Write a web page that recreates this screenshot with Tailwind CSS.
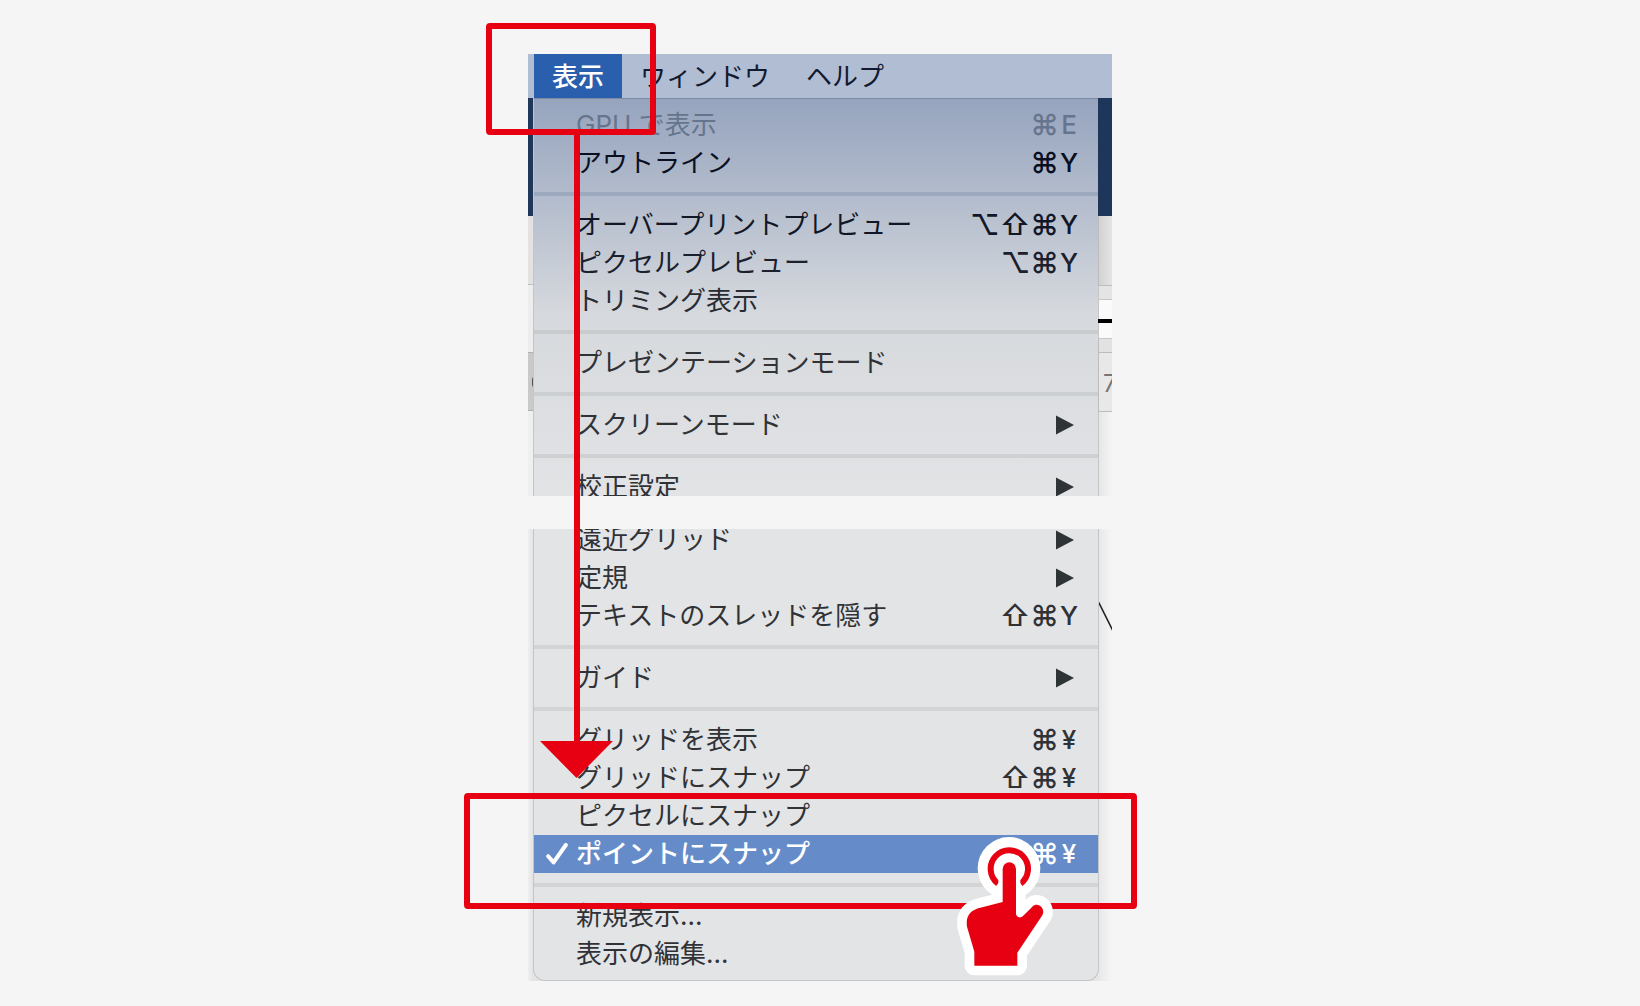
<!DOCTYPE html>
<html lang="ja">
<head>
  <meta charset="UTF-8" />
  <meta name="viewport" content="width=device-width, initial-scale=1.0" />
  <title>表示メニュー - ポイントにスナップ</title>
  <script src="https://cdn.jsdelivr.net/npm/@tailwindcss/browser@4"></script>
</head>
<body class="bg-[#f5f5f5] font-['Inter','Noto_Sans_CJK_JP',sans-serif] text-[26px] leading-[38px] text-[#303236]">
  <main class="flex min-h-screen justify-center pt-[54px] pb-6">
    <div class="relative w-[584px]">

      <!-- Upper part of the menu -->
      <section class="flex h-[442px] flex-col overflow-hidden">
        <nav class="flex h-11 shrink-0 bg-[#b1bdd3] pl-1.5 leading-[46px] text-[#111a2e]">
          <button class="bg-[#2a5fae] px-[18px] font-medium text-white">表示</button>
          <button class="px-[18px]">ウィンドウ</button>
          <button class="px-[18px]">ヘルプ</button>
        </nav>

        <div class="flex">
          <!-- Window behind the menu, left edge -->
          <div class="w-1.5 shrink-0 border-r border-[#c4c5c7]">
            <div class="h-[118px] bg-[#1f3759]"></div>
            <div class="h-[69px] border-b border-[#bdbdbd] bg-[#e3e2e1]"></div>
            <div class="h-[67px] bg-[#ededed]"></div>
            <div class="flex h-[59px] items-center overflow-hidden border-y border-[#b0b0b0] bg-[#c9c9c9]">
              <div class="ml-1 h-3 w-2 shrink-0 rounded-full bg-[#555]"></div>
            </div>
            <div class="h-[85px] bg-[#efefef]"></div>
          </div>

          <ul class="flex-1 border-t border-[#7d8aa3] bg-linear-to-b from-[#96a4be] via-[#d6d9dd] via-[53%] to-[#e3e4e6] pt-[7px]">
            <li><button disabled class="flex w-full pr-[19px] pl-[42px] text-[#66758d]"><span class="flex-1 text-left">GPU で表示</span><kbd class="font-['Inter'] text-[29px] font-medium">⌘</kbd><kbd class="w-5 text-center font-['Inter'] font-medium">E</kbd></button></li>
            <li><button class="flex w-full pr-[19px] pl-[42px] text-[#090f1f]"><span class="flex-1 text-left">アウトライン</span><kbd class="font-['Inter'] text-[29px] font-medium">⌘</kbd><kbd class="w-5 text-center font-['Inter'] font-medium">Y</kbd></button></li>
            <li class="my-2.5 h-1 bg-[#9ca9be]"></li>
            <li><button class="flex w-full pr-[19px] pl-[42px] text-[#111727]"><span class="flex-1 text-left">オーバープリントプレビュー</span><kbd class="font-['Inter'] text-[29px] font-medium">⌥⇧⌘</kbd><kbd class="w-5 text-center font-['Inter'] font-medium">Y</kbd></button></li>
            <li><button class="flex w-full pr-[19px] pl-[42px] text-[#1b202c]"><span class="flex-1 text-left">ピクセルプレビュー</span><kbd class="font-['Inter'] text-[29px] font-medium">⌥⌘</kbd><kbd class="w-5 text-center font-['Inter'] font-medium">Y</kbd></button></li>
            <li><button class="flex w-full pr-[19px] pl-[42px] text-[#282b31]"><span class="flex-1 text-left">トリミング表示</span></button></li>
            <li class="my-2.5 h-1 bg-[#c9cccf]"></li>
            <li><button class="flex w-full pr-[19px] pl-[42px]"><span class="flex-1 text-left">プレゼンテーションモード</span></button></li>
            <li class="my-2.5 h-1 bg-[#cccfd1]"></li>
            <li><button class="flex w-full items-center pr-6 pl-[42px]"><span class="flex-1 text-left">スクリーンモード</span><svg class="h-5 w-[18px]" viewBox="0 0 18 20" fill="#2e3336"><path d="M0 0.5L18 10L0 19.5Z" /></svg></button></li>
            <li class="my-2.5 h-1 bg-[#ced0d2]"></li>
            <li><button class="flex w-full items-center pr-6 pl-[42px]"><span class="flex-1 text-left">校正設定</span><svg class="h-5 w-[18px]" viewBox="0 0 18 20" fill="#2e3336"><path d="M0 0.5L18 10L0 19.5Z" /></svg></button></li>
          </ul>

          <!-- Window behind the menu, right edge -->
          <div class="w-3.5 shrink-0">
            <div class="h-[118px] bg-[#1e365a]"></div>
            <div class="h-[70px] border-b border-l border-[#bcbcbc] bg-linear-to-r from-[#d2d2d2] to-[#e5e4e3]"></div>
            <div class="h-3.5 border-b border-l border-[#c6c6c6] bg-[#e4e4e4]"></div>
            <div class="h-[19px] border-l border-[#c6c6c6] bg-[#fafafa]"></div>
            <div class="h-1 bg-black"></div>
            <div class="h-4 border-b border-l border-[#c6c6c6] bg-[#fafafa]"></div>
            <div class="h-3.5 border-b border-l border-[#bcbcbc] bg-[#e2e2e2]"></div>
            <div class="h-[59px] overflow-hidden border-b border-l border-[#bcbcbc] bg-[#e8e8e8] pl-1 text-2xl leading-[62px] text-[#777]">7</div>
            <div class="h-[85px] border-l border-[#c6c6c6] bg-linear-to-r from-[#e6e6e6] to-[#f5f5f5]"></div>
          </div>
        </div>
      </section>

      <!-- Lower part of the menu -->
      <section class="mt-[33px] flex h-[452px] overflow-hidden">
        <div class="w-[5px] shrink-0 bg-linear-to-r from-[#efefef] to-[#e4e4e4]"></div>
        <div class="flex flex-1 bg-linear-to-r from-[#e4e4e4] from-[97%] to-[#f5f5f5]">
          <ul class="flex-1 rounded-b-xl border-x border-b border-[#c4c5c8] bg-[#e3e4e6]">
            <li class="-mt-2"><button class="flex w-full items-center pr-6 pl-[42px]"><span class="flex-1 text-left">遠近グリッド</span><svg class="h-5 w-[18px]" viewBox="0 0 18 20" fill="#2e3336"><path d="M0 0.5L18 10L0 19.5Z" /></svg></button></li>
            <li><button class="flex w-full items-center pr-6 pl-[42px]"><span class="flex-1 text-left">定規</span><svg class="h-5 w-[18px]" viewBox="0 0 18 20" fill="#2e3336"><path d="M0 0.5L18 10L0 19.5Z" /></svg></button></li>
            <li><button class="flex w-full pr-[19px] pl-[42px]"><span class="flex-1 text-left">テキストのスレッドを隠す</span><kbd class="font-['Inter'] text-[29px] font-medium">⇧⌘</kbd><kbd class="w-5 text-center font-['Inter'] font-medium">Y</kbd></button></li>
            <li class="my-2.5 h-1 bg-[#d2d4d6]"></li>
            <li><button class="flex w-full items-center pr-6 pl-[42px]"><span class="flex-1 text-left">ガイド</span><svg class="h-5 w-[18px]" viewBox="0 0 18 20" fill="#2e3336"><path d="M0 0.5L18 10L0 19.5Z" /></svg></button></li>
            <li class="my-2.5 h-1 bg-[#d2d4d6]"></li>
            <li><button class="flex w-full pr-[19px] pl-[42px]"><span class="flex-1 text-left">グリッドを表示</span><kbd class="font-['Inter'] text-[29px] font-medium">⌘</kbd><kbd class="w-5 text-center font-['Inter'] font-medium">¥</kbd></button></li>
            <li><button class="flex w-full pr-[19px] pl-[42px]"><span class="flex-1 text-left">グリッドにスナップ</span><kbd class="font-['Inter'] text-[29px] font-medium">⇧⌘</kbd><kbd class="w-5 text-center font-['Inter'] font-medium">¥</kbd></button></li>
            <li><button class="flex w-full pr-[19px] pl-[42px]"><span class="flex-1 text-left">ピクセルにスナップ</span></button></li>
            <li>
              <button class="flex w-full items-center bg-[#658cc9] pr-[19px] pl-3 font-medium text-white">
                <svg class="mr-2 h-[22px] w-[22px]" viewBox="0 0 22 22" fill="none" stroke="#fff" stroke-width="4" stroke-linecap="round" stroke-linejoin="round"><path d="M2.2 13.2L7.6 19.4L19.8 2" /></svg>
                <span class="flex-1 text-left">ポイントにスナップ</span><kbd class="font-['Inter'] text-[29px]">⌥⌘</kbd><kbd class="w-5 text-center font-['Inter']">¥</kbd>
              </button>
            </li>
            <li class="my-2.5 h-1 bg-[#d2d4d6]"></li>
            <li><button class="flex w-full pl-[42px]">新規表示...</button></li>
            <li><button class="flex w-full pl-[42px]">表示の編集...</button></li>
          </ul>
          <svg class="w-[13px] shrink-0" viewBox="0 0 13 452" fill="none" stroke="#222" stroke-width="1.5"><path d="M-1 72L14 102" /></svg>
        </div>
      </section>

      <!-- Red guide: frames, arrow and tapping hand -->
      <div class="absolute -top-[31px] -left-[42px] h-28 w-[170px] rounded-sm border-6 border-[#e60012]"></div>
      <div class="absolute top-20 left-[46px] h-[608px] w-1.5 bg-[#e60012]"></div>
      <svg class="absolute top-[687px] left-3 h-[37px] w-[73px]" viewBox="0 0 73 37" fill="#e60012"><path d="M0 0H73L36.5 37Z" /></svg>
      <div class="absolute top-[739px] -left-16 h-[116px] w-[673px] rounded-sm border-6 border-[#e60012]"></div>
      <svg class="absolute top-[781px] left-[429px] h-[142px] w-[97px]" viewBox="290 195 291 426">
        <circle cx="446" cy="295" r="94" fill="#fff" />
        <path d="M427 396V297A20 20 0 0 1 467 297V430C467 442 480 446 488 438L516 410C531 394 557 414 546 436L471 548V587H342V545L320 470C315 436 332 419 360 413Z" fill="#fff" stroke="#fff" stroke-width="58" stroke-linejoin="round" />
        <path d="M413 341A56 56 0 1 1 481 341" fill="none" stroke="#e60012" stroke-width="18" />
        <path d="M414 396V297A33 33 0 0 1 480 297V396Z" fill="#fff" />
        <path d="M427 396V297A20 20 0 0 1 467 297V430C467 442 480 446 488 438L516 410C531 394 557 414 546 436L471 548V587H342V545L320 470C315 436 332 419 360 413Z" fill="#e60012" />
      </svg>
    </div>
  </main>
</body>
</html>
